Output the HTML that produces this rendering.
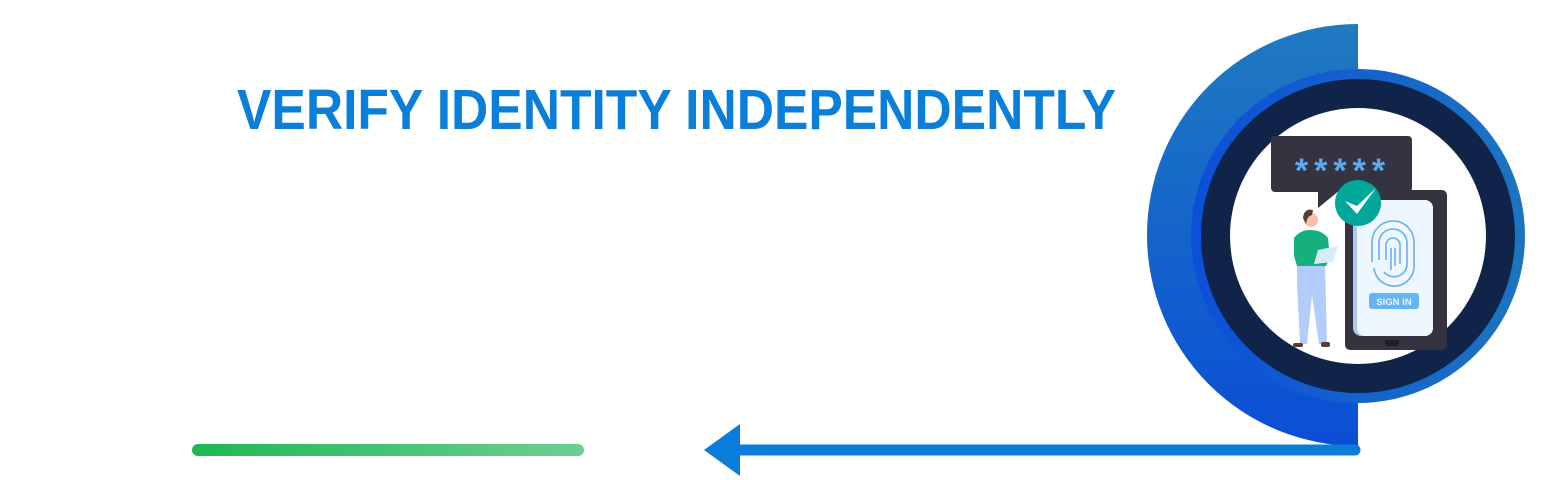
<!DOCTYPE html>
<html><head><meta charset="utf-8"><style>
html,body{margin:0;padding:0;background:#fff;width:1552px;height:480px;overflow:hidden;position:relative;font-family:"Liberation Sans",sans-serif}
.t{position:absolute;left:237px;top:80px;white-space:nowrap;font-size:57px;font-weight:bold;color:#0a7fd9;transform-origin:0 0;transform:scaleX(0.905);line-height:60px}
</style></head><body>
<div class="t">VERIFY IDENTITY INDEPENDENTLY</div>
<svg width="1552" height="480" style="position:absolute;left:0;top:0">
<defs>
<linearGradient id="g1" x1="0" y1="0" x2="0" y2="1"><stop offset="0" stop-color="#1f7ac0"/><stop offset="1" stop-color="#0a4ed6"/></linearGradient>
<linearGradient id="g2" x1="0" y1="0" x2="1" y2="0"><stop offset="0" stop-color="#0c4fd8"/><stop offset="1" stop-color="#1c74c0"/></linearGradient>
<linearGradient id="g3" gradientUnits="userSpaceOnUse" x1="192" y1="0" x2="584" y2="0"><stop offset="0" stop-color="#1db954"/><stop offset="1" stop-color="#6dcf93"/></linearGradient>
</defs>
<path d="M1358 24 A211 211 0 0 0 1358 446 Z" fill="url(#g1)"/>
<circle cx="1358" cy="236" r="167" fill="url(#g2)"/>
<circle cx="1358" cy="236" r="157" fill="#10244a"/>
<circle cx="1358" cy="236" r="128" fill="#fff"/>
<line x1="198" y1="450" x2="578" y2="450" stroke="url(#g3)" stroke-width="12" stroke-linecap="round"/>
<line x1="736" y1="450" x2="1355" y2="450" stroke="#0a7cd9" stroke-width="11" stroke-linecap="round"/>
<polygon points="704,450 740,424 740,476" fill="#0a7cd9"/>
<rect x="1345" y="190" width="102" height="160" rx="5" fill="#34333f"/>
<rect x="1353" y="200" width="80" height="136" rx="8" fill="#a9c8f5"/>
<rect x="1357" y="200" width="76" height="136" rx="8" fill="#eef6ff"/>
<rect x="1385" y="340" width="14" height="6" rx="2" fill="#1e1e28"/>
<g fill="none" stroke="#6aaef0" stroke-width="1.6">
<path d="M1372 262 V242 A21 21 0 0 1 1414 242 V264 A20 20 0 0 1 1374 268"/>
<path d="M1379 260 V243 A14 14 0 0 1 1407 243 V265 A13 13 0 0 1 1384 272"/>
<path d="M1386 260 V245 A7 7 0 0 1 1400 245 V264"/>
<path d="M1391 248 V270 M1395 248 V266"/>
</g>
<rect x="1369" y="293" width="50" height="16" rx="3" fill="#64b5f6"/>
<text x="1394" y="305" font-size="9.5" font-weight="bold" fill="#eaf4ff" text-anchor="middle" font-family="Liberation Sans">SIGN IN</text>
<rect x="1271" y="136" width="141" height="56" rx="4" fill="#34333f"/>
<polygon points="1318,190 1340,190 1318,208" fill="#34333f"/>
<text x="1343" y="182" font-size="34" font-weight="bold" fill="#5aaaf0" text-anchor="middle" letter-spacing="6" font-family="Liberation Sans">*****</text>
<circle cx="1358" cy="203" r="23" fill="#00a79a"/>
<path d="M1345 201 L1357 214 L1376 188 L1357 206 Z" fill="#fff"/>
<path d="M1297 283 L1300 344 L1307 344 L1312 295 L1319 344 L1327 344 L1325 265 L1297 265 Z" fill="#b2cdfb"/>
<path d="M1294 238 Q1300 230 1310 230 Q1322 230 1328 238 L1330 258 L1326 266 L1297 266 L1294 256 Z" fill="#16b07e"/>
<circle cx="1311" cy="220" r="7" fill="#f6c1a6"/>
<path d="M1303 218 Q1304 208 1313 210 L1312 215 Q1307 216 1306 224 Z" fill="#5a3b35"/>
<polygon points="1318,250 1338,246 1333,262 1314,264" fill="#d8ecf7"/>
<rect x="1293" y="343" width="10" height="4" rx="2" fill="#5a3b35"/>
<rect x="1321" y="342" width="9" height="5" rx="2" fill="#5a3b35"/>
</svg>
</body></html>
